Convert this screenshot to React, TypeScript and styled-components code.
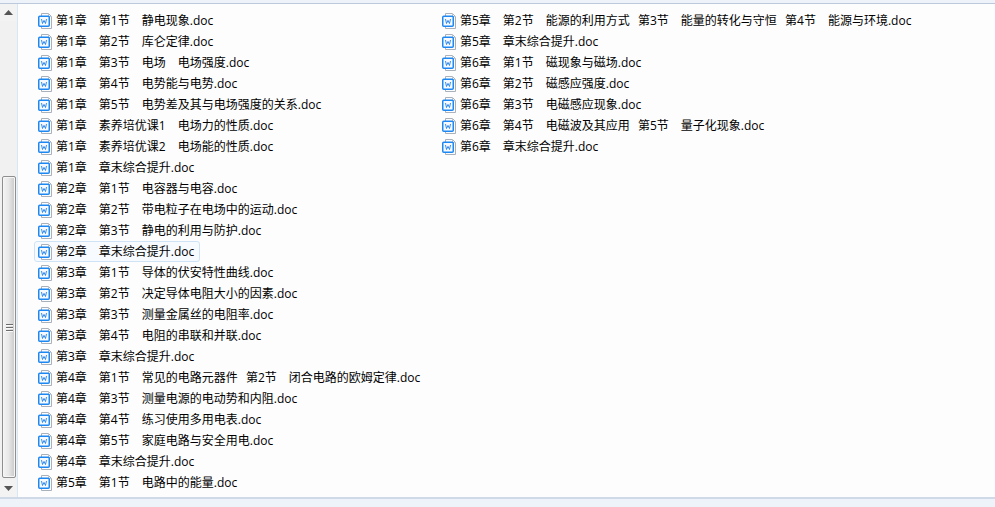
import React from 'react';
import styled, { createGlobalStyle } from 'styled-components';

const leftFiles = [
  '第1章　第1节　静电现象.doc',
  '第1章　第2节　库仑定律.doc',
  '第1章　第3节　电场　电场强度.doc',
  '第1章　第4节　电势能与电势.doc',
  '第1章　第5节　电势差及其与电场强度的关系.doc',
  '第1章　素养培优课1　电场力的性质.doc',
  '第1章　素养培优课2　电场能的性质.doc',
  '第1章　章末综合提升.doc',
  '第2章　第1节　电容器与电容.doc',
  '第2章　第2节　带电粒子在电场中的运动.doc',
  '第2章　第3节　静电的利用与防护.doc',
  '第2章　章末综合提升.doc',
  '第3章　第1节　导体的伏安特性曲线.doc',
  '第3章　第2节　决定导体电阻大小的因素.doc',
  '第3章　第3节　测量金属丝的电阻率.doc',
  '第3章　第4节　电阻的串联和并联.doc',
  '第3章　章末综合提升.doc',
  '第4章　第1节　常见的电路元器件  第2节　闭合电路的欧姆定律.doc',
  '第4章　第3节　测量电源的电动势和内阻.doc',
  '第4章　第4节　练习使用多用电表.doc',
  '第4章　第5节　家庭电路与安全用电.doc',
  '第4章　章末综合提升.doc',
  '第5章　第1节　电路中的能量.doc',
];

const rightFiles = [
  '第5章　第2节　能源的利用方式  第3节　能量的转化与守恒  第4节　能源与环境.doc',
  '第5章　章末综合提升.doc',
  '第6章　第1节　磁现象与磁场.doc',
  '第6章　第2节　磁感应强度.doc',
  '第6章　第3节　电磁感应现象.doc',
  '第6章　第4节　电磁波及其应用  第5节　量子化现象.doc',
  '第6章　章末综合提升.doc',
];

const selectedFile = '第2章　章末综合提升.doc';

const GlobalStyle = createGlobalStyle`
  html, body {
    margin: 0;
    padding: 0;
    background: #fdfdfd;
  }
  body {
    font-family: "Open Sans", "Noto Sans CJK SC", sans-serif;
    font-size: 12px;
    color: #000;
  }
`;

const Window = styled.div`
  width: 995px;
  height: 507px;
  display: flex;
  flex-direction: column;
  overflow: hidden;
  background: #fdfdfd;
`;

const TopEdge = styled.div`
  height: 4px;
  flex: none;
  background: #eef2f9;
  border-bottom: 1px solid #bcc9dc;
  box-sizing: border-box;
`;

const Body = styled.div`
  flex: 1;
  display: flex;
  min-height: 0;
`;

const BottomEdge = styled.div`
  height: 10px;
  flex: none;
  box-sizing: border-box;
  background: #eef2f9;
  border-top: 2px solid #d0d9e8;
`;

const Scrollbar = styled.div`
  width: 18px;
  flex: none;
  box-sizing: border-box;
  display: flex;
  flex-direction: column;
  background: #f1f1f1;
  border-right: 1px solid #d6e8f7;
`;

const ArrowButton = styled.div`
  height: 17px;
  flex: none;
  display: flex;
  align-items: center;
  justify-content: center;
  padding-right: 1px;
  background: #f3f3f3;
`;

const Track = styled.div`
  flex: 1;
  display: flex;
  flex-direction: column;
  justify-content: flex-end;
  padding: 0 1px 2px 2px;
`;

const Thumb = styled.div`
  height: 302px;
  box-sizing: border-box;
  border: 1px solid #8f8f8f;
  border-radius: 2px;
  background: linear-gradient(90deg, #f4f4f4 0%, #e8e8e8 45%, #c9c9c9 100%);
  box-shadow: inset 0 0 0 1px #f6f6f6;
  display: flex;
  flex-direction: column;
  align-items: center;
  justify-content: center;
  gap: 2px;
`;

const Grip = styled.span`
  width: 7px;
  height: 1px;
  background: #6d6d6d;
  box-shadow: 0 1px 0 #fafafa;
`;

const ListArea = styled.div`
  flex: 1;
  display: flex;
  align-items: flex-start;
  padding: 6px 0 0 16px;
`;

const Column = styled.div<{ $width: number }>`
  width: ${(p) => p.$width}px;
  flex: none;
  display: flex;
  flex-direction: column;
`;

const Row = styled.div<{ $selected?: boolean }>`
  height: 21px;
  box-sizing: border-box;
  width: fit-content;
  display: flex;
  align-items: center;
  gap: 3px;
  padding: 0 5px 0 3px;
  white-space: pre;
  line-height: 19px;
  border: 1px solid ${(p) => (p.$selected ? '#cfe3f6' : 'transparent')};
  border-radius: 3px;
  background: ${(p) => (p.$selected ? '#f7fbff' : 'transparent')};
`;

const FileName = styled.span`
  display: block;
`;

// the double space between two sections is a little wider than in this font
const SectionGap = styled.span`
  word-spacing: 1px;
`;

function WordIcon() {
  return (
    <svg width="15" height="16" viewBox="0 0 15 16" fill="none">
      <path d="M3.5 .5H10.5L13.5 3.5V15.5H3.5Z" fill="#fcfcfc" stroke="#aab1bb" />
      <path d="M10.5 .5V3.5H13.5" stroke="#c3c8cf" />
      <rect x=".75" y="3.25" width="10.5" height="10" rx="1" fill="#f6faff" stroke="#1e88f2" strokeWidth="1.5" />
      <path d="M3.5 6L4.5 10.5L6 7.4L7.5 10.5L8.5 6" stroke="#1e7fe8" strokeWidth=".9" />
    </svg>
  );
}

function FileRow({ name }: { name: string }) {
  const parts = name.split('  ');
  return (
    <Row $selected={name === selectedFile}>
      <WordIcon />
      <FileName>
        {parts.map((part, i) => (
          <React.Fragment key={part}>
            {i > 0 && <SectionGap>{'  '}</SectionGap>}
            {part}
          </React.Fragment>
        ))}
      </FileName>
    </Row>
  );
}

export default function App() {
  return (
    <Window>
      <GlobalStyle />
      <TopEdge />
      <Body>
        <Scrollbar>
          <ArrowButton>
            <svg width="9" height="5" viewBox="0 0 9 5">
              <path d="M4.5 0L9 5H0Z" fill="#555" />
            </svg>
          </ArrowButton>
          <Track>
            <Thumb>
              <Grip />
              <Grip />
              <Grip />
            </Thumb>
          </Track>
          <ArrowButton>
            <svg width="9" height="5" viewBox="0 0 9 5">
              <path d="M4.5 5L9 0H0Z" fill="#555" />
            </svg>
          </ArrowButton>
        </Scrollbar>
        <ListArea>
          <Column $width={404}>
            {leftFiles.map((name) => (
              <FileRow key={name} name={name} />
            ))}
          </Column>
          <Column $width={500}>
            {rightFiles.map((name) => (
              <FileRow key={name} name={name} />
            ))}
          </Column>
        </ListArea>
      </Body>
      <BottomEdge />
    </Window>
  );
}
